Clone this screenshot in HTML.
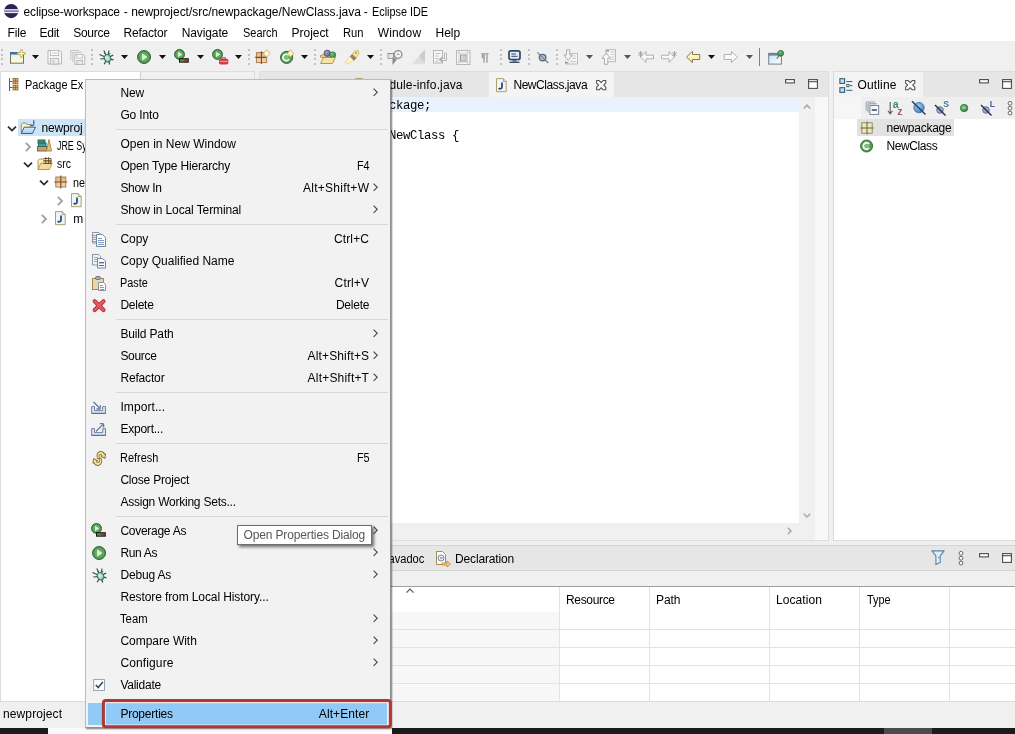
<!DOCTYPE html>
<html><head><meta charset="utf-8"><title>Eclipse IDE</title>
<style>
*{box-sizing:border-box;margin:0;padding:0}
html,body{width:1015px;height:734px;overflow:hidden;background:#fff}
body{font-family:"Liberation Sans",sans-serif;font-size:12px;color:#000;position:relative}
.a{position:absolute}
.t{position:absolute;white-space:nowrap;line-height:16px;height:16px;color:#000}
.code{font-family:"Liberation Mono",monospace;font-size:12.3px;letter-spacing:-.38px}
svg{position:absolute;overflow:visible}
#root{position:absolute;left:0;top:0;width:1015px;height:734px;will-change:transform}
.sep{position:absolute;left:116px;width:272px;height:1px;background:#d8d8d8}
.grip{position:absolute;width:2px;height:16px;top:49px;background:repeating-linear-gradient(#c2c2c4 0 2px,rgba(0,0,0,0) 2px 4.5px)}
</style></head>
<body>
<div id="root">
<svg width="0" height="0" style="left:0;top:0"><defs>
<linearGradient id="gNew" x1="0" y1="0" x2="0" y2="1"><stop offset="0" stop-color="#cfe6fb"/><stop offset=".5" stop-color="#f4f6ea"/><stop offset="1" stop-color="#fdf7d4"/></linearGradient>
<radialGradient id="gRun" cx=".5" cy=".5" r=".6"><stop offset="0" stop-color="#8fc48c"/><stop offset=".6" stop-color="#5a9e5c"/><stop offset="1" stop-color="#2f7a3a"/></radialGradient>
<linearGradient id="gTri" x1="0" y1="0" x2="1" y2="0"><stop offset="0" stop-color="#c9efc0"/><stop offset="1" stop-color="#f3fde8"/></linearGradient>
<radialGradient id="gBug" cx=".4" cy=".4" r=".7"><stop offset="0" stop-color="#d4f0e8"/><stop offset="1" stop-color="#8cc4b4"/></radialGradient>
<linearGradient id="gPkg" x1="0" y1="0" x2="0" y2="1"><stop offset="0" stop-color="#e2b88c"/><stop offset="1" stop-color="#f0d4b0"/></linearGradient>
<radialGradient id="gPurp" cx=".4" cy=".35" r=".7"><stop offset="0" stop-color="#a4a0d0"/><stop offset="1" stop-color="#5c5890"/></radialGradient>
<radialGradient id="gGrn" cx=".4" cy=".35" r=".7"><stop offset="0" stop-color="#7cc47c"/><stop offset="1" stop-color="#2f7a3c"/></radialGradient>
<linearGradient id="gBack" x1="0" y1="0" x2="0" y2="1"><stop offset="0" stop-color="#fffbe0"/><stop offset="1" stop-color="#f9e89c"/></linearGradient>
<linearGradient id="gPersp" x1="0" y1="0" x2="1" y2="1"><stop offset="0" stop-color="#c4e0f8"/><stop offset="1" stop-color="#fcfffc"/></linearGradient>
<radialGradient id="gBlue" cx=".4" cy=".35" r=".7"><stop offset="0" stop-color="#a4d0f0"/><stop offset="1" stop-color="#3c7cbc"/></radialGradient>
<linearGradient id="gProj" x1="0" y1="0" x2="0" y2="1"><stop offset="0" stop-color="#dcecfc"/><stop offset="1" stop-color="#a8ccf0"/></linearGradient>
</defs></svg>
<!-- window chrome -->
<div class="a" style="left:0px;top:0px;width:1015px;height:42px;background:#fff"></div>
<div class="a" style="left:0px;top:41px;width:1015px;height:31px;background:#f0f0f0"></div>
<div class="a" style="left:0px;top:71px;width:1015px;height:657px;background:#f0f0f0"></div>
<div class="a" style="left:0px;top:728px;width:1015px;height:6px;background:#fafafa"></div>
<div class="a" style="left:0px;top:728px;width:48px;height:6px;background:#1b1b1b"></div>
<div class="a" style="left:392px;top:728px;width:623px;height:6px;background:#1b1b1b"></div>
<div class="a" style="left:884px;top:728px;width:48px;height:6px;background:#4b4b4b"></div>
<svg style="left:3.6px;top:3.8px" width="16" height="16" viewBox="0 0 16 16"><circle cx="7.2" cy="7.1" r="7.1" fill="#2c2255"/><rect x="0" y="5.2" width="14.4" height="3.9" fill="#8784a6"/><rect x="0" y="5.2" width="14.4" height="1.1" fill="#ece9f4"/><rect x="0" y="8" width="14.4" height="1.1" fill="#ece9f4"/></svg>
<span class="t" style="left:23.5px;top:4px;letter-spacing:-0.14px">eclipse-workspace</span>
<span class="t" style="left:123.7px;top:4px">-</span>
<span class="t" style="left:131.2px;top:4px;letter-spacing:-0.03px">newproject/src/newpackage/NewClass.java</span>
<span class="t" style="left:363.7px;top:4px">-</span>
<span class="t" style="left:371.8px;top:4px;transform:scaleX(0.903);transform-origin:0 0">Eclipse IDE</span>
<span class="t" style="left:7.5px;top:24.5px;letter-spacing:-0.16px">File</span>
<span class="t" style="left:39.4px;top:24.5px;letter-spacing:-0.22px">Edit</span>
<span class="t" style="left:73.2px;top:24.5px;letter-spacing:-0.26px">Source</span>
<span class="t" style="left:123.5px;top:24.5px;letter-spacing:-0.21px">Refactor</span>
<span class="t" style="left:181.7px;top:24.5px;letter-spacing:-0.11px">Navigate</span>
<span class="t" style="left:242.5px;top:24.5px;transform:scaleX(0.912);transform-origin:0 0">Search</span>
<span class="t" style="left:291.6px;top:24.5px;letter-spacing:-0.04px">Project</span>
<span class="t" style="left:342.6px;top:24.5px;transform:scaleX(0.936);transform-origin:0 0">Run</span>
<span class="t" style="left:377.7px;top:24.5px;letter-spacing:0.14px">Window</span>
<span class="t" style="left:435.5px;top:24.5px;letter-spacing:0.00px">Help</span>
<!-- toolbar -->
<div class="grip" style="left:1px"></div>
<div class="grip" style="left:91px"></div>
<div class="grip" style="left:248px"></div>
<div class="grip" style="left:314px"></div>
<div class="grip" style="left:380px"></div>
<div class="grip" style="left:500px"></div>
<div class="grip" style="left:528px"></div>
<div class="grip" style="left:556px"></div>
<svg style="left:9px;top:49px" width="16" height="16" viewBox="0 0 16 16"><rect x="1.5" y="3.7" width="13" height="10.5" fill="url(#gNew)" stroke="#6e7458"/><rect x="1" y="3.2" width="11" height="2.3" fill="#3f6ea3"/><path d="M12.4 1.3v6.4M9.2 4.5h6.4" stroke="#cdb95c" stroke-width="2.6" stroke-linecap="round"/><path d="M12.4 2.3v4.4M10.2 4.5h4.4" stroke="#fffbe0" stroke-width="1.1" stroke-linecap="round"/></svg>
<svg style="left:47px;top:49px" width="16" height="16" viewBox="0 0 16 16"><path d="M1 1.5h12l1.5 1.5v12H1z" fill="#f4f4f4" stroke="#b9b9b9"/><rect x="3.5" y="1.5" width="8" height="5" fill="#fbfbfb" stroke="#c1c1c1"/><path d="M5 4h5" stroke="#c9c9c9"/><rect x="3.5" y="9.5" width="8" height="5.5" fill="#ededed" stroke="#bcbcbc"/><rect x="5.5" y="11" width="2" height="3.5" fill="#cfcfcf"/></svg>
<svg style="left:70px;top:49px" width="16" height="16" viewBox="0 0 16 16"><path d="M.8 11V1.5h8.7" fill="none" stroke="#c4c4c4"/><path d="M2.8 13V3.5h8.7" fill="none" stroke="#c0c0c0"/><path d="M4.8 5.5h8.7l1.3 1.3v8.7h-10z" fill="#f4f4f4" stroke="#b9b9b9"/><rect x="7" y="5.5" width="5.5" height="3.5" fill="#fbfbfb" stroke="#c4c4c4"/><rect x="7" y="11.5" width="5.5" height="4" fill="#e9e9e9" stroke="#bcbcbc"/></svg>
<svg style="left:98px;top:49px" width="16" height="16" viewBox="0 0 16 16"><path d="M9.3 8.5L5.8 1.6M9.7 8.5L11 1.5M9 8.8L1.5 5.5M9 9.3L2.3 10M9.5 9L6.2 15.2M9.8 9L11.7 15.5M10 8.5L15.2 6.1M10 9.3L15.5 10.8" stroke="#27574a" stroke-width="1.2" fill="none"/><path d="M6.3 4.2L8 5.8M12.2 4l-1.4 1.8" stroke="#27574a" stroke-width="1"/><ellipse cx="9.5" cy="9.2" rx="3.1" ry="3.7" transform="rotate(-25 9.5 9.2)" fill="url(#gBug)" stroke="#34705f" stroke-width="1"/></svg>
<svg style="left:136px;top:49px" width="16" height="16" viewBox="0 0 16 16"><circle cx="8.050" cy="8" r="6.5" fill="url(#gRun)" stroke="#2b6b34" stroke-width="1"/><path d="M6 4.2l5.2 3.8L6 11.8z" fill="url(#gTri)"/></svg>
<svg style="left:174px;top:49px" width="16" height="16" viewBox="0 0 16 16"><circle cx="5.5" cy="5.4" r="5" fill="url(#gRun)" stroke="#2b6b34" stroke-width=".9"/><path d="M4 2.6l4 2.8-4 2.8z" fill="url(#gTri)"/><rect x="5" y="9.2" width="9.8" height="4.5" fill="#141414"/><rect x="6" y="10.2" width="4" height="2.5" fill="#3f9a3c"/><rect x="10" y="10.2" width="3.8" height="2.5" fill="#a8382c"/></svg>
<svg style="left:212px;top:49px" width="16" height="16" viewBox="0 0 16 16"><circle cx="5.5" cy="5.4" r="5" fill="url(#gRun)" stroke="#2b6b34" stroke-width=".9"/><path d="M4 2.6l4 2.8-4 2.8z" fill="url(#gTri)"/><rect x="9.9" y="8.7" width="3.6" height="2.5" rx=".8" fill="none" stroke="#c23a3a" stroke-width="1.1"/><rect x="7.5" y="10.3" width="8.4" height="4.7" rx="1.1" fill="#d8484c" stroke="#b8262c" stroke-width=".8"/><path d="M7.8 12.4h7.8" stroke="#f0a0a0" stroke-width=".9"/></svg>
<svg style="left:255px;top:49px" width="16" height="16" viewBox="0 0 16 16"><rect x="1.4" y="3.6" width="10.3" height="10" fill="url(#gPkg)" stroke="#a9784c" stroke-width=".9"/><path d="M6.4 2.2v12.8M.2 8.4h11" stroke="#7a4a24" stroke-width="1.1"/><path d="M11.7 .8l3.3 3.7-3.3 3.7-3.3-3.7z" fill="#fdf3cc" stroke="#c8a45c" stroke-width=".8"/><path d="M11.7 2.5v4M9.9 4.5h3.6" stroke="#fff" stroke-width=".9"/></svg>
<svg style="left:279px;top:49px" width="16" height="16" viewBox="0 0 16 16"><circle cx="7.6" cy="8.4" r="6.1" fill="url(#gRun)" stroke="#2b6b34" stroke-width=".9"/><path d="M10 6.5A3.3 3.3 0 1 0 10 10.3" fill="none" stroke="#e9fbe4" stroke-width="1.9"/><path d="M11.5 .8l3.2 3.6-3.2 3.6-3.2-3.6z" fill="#fbf0b8" stroke="#c8a848" stroke-width=".8"/><path d="M11.5 2.5v3.8M9.8 4.4h3.4" stroke="#fffdf0" stroke-width=".9"/></svg>
<svg style="left:320px;top:49px" width="16" height="16" viewBox="0 0 16 16"><path d="M.6 6.3h2l.8-1.2h3.5l.8 1.2h5.5v2H.6z" fill="#f3d98c" stroke="#b48a3c" stroke-width=".9"/><circle cx="7.2" cy="4.3" r="3.2" fill="url(#gPurp)" stroke="#4b4878" stroke-width=".7"/><circle cx="12.6" cy="5.9" r="3.1" fill="url(#gGrn)" stroke="#2f6b3a" stroke-width=".7"/><path d="M.6 14.5l2.8-6h12l-3 6z" fill="#f7e4a0" stroke="#b48a3c" stroke-width=".9" stroke-linejoin="round"/></svg>
<svg style="left:344px;top:49px" width="16" height="16" viewBox="0 0 16 16"><path d="M.8 13.5L8 5.5l4.5 4L4 15z" fill="#fbf4c0" stroke="#e0d08c" stroke-width=".7"/><path d="M6.3 7.5l2.2-2.3 3.5 3.5-2 2.5z" fill="#8c8478" stroke="#6c645c" stroke-width=".7"/><path d="M8.3 5.2L11 1.8l3.2-.3.8 3-2.8 4.3z" fill="#f7e8a0" stroke="#c8ac5c" stroke-width=".8"/><circle cx="12" cy="4" r=".9" fill="#a88c3c"/></svg>
<svg style="left:387px;top:49px" width="16" height="16" viewBox="0 0 16 16"><rect x="1" y="4.5" width="5.5" height="5" fill="#e4e4e4" stroke="#9c9c9c" stroke-width=".9"/><path d="M.5 4.5h7" stroke="#8c8c8c"/><path d="M5.5 8v8l4.5-5.5z" fill="#8a8a8a"/><circle cx="11" cy="5.5" r="3.9" fill="#f2f2f2" stroke="#8c8c8c" stroke-width="1.3"/><path d="M9.5 5.5h3M11 4v1.5" stroke="#a4a4a4" stroke-width=".9"/></svg>
<svg style="left:410px;top:49px" width="16" height="16" viewBox="0 0 16 16"><path d="M2.5 14.5L14.5 .5l.5 13.5z" fill="#dedede"/><path d="M9 7l6-6.5v13.5z" fill="#cdcdcd"/><path d="M2 14.7h13" stroke="#e0e0e0"/></svg>
<svg style="left:432px;top:49px" width="16" height="16" viewBox="0 0 16 16"><rect x="1.5" y="1.5" width="9" height="12.5" fill="#f7f7f7" stroke="#b4b4b4"/><path d="M3.5 4.5h5M3.5 7h3M3.5 9.5h3M3.5 12h3" stroke="#b8b8b8" stroke-width=".9"/><path d="M13.5 3.5v7h-4" fill="none" stroke="#a8a8a8" stroke-width="2.6"/><path d="M13.5 3.5v7h-4" fill="none" stroke="#f4f4f4" stroke-width="1"/><path d="M10 7.5L6.5 10.5 10 13.5z" fill="#b0b0b0"/></svg>
<svg style="left:455px;top:49px" width="16" height="16" viewBox="0 0 16 16"><rect x="1.5" y="1.5" width="13.5" height="14" fill="#f8f8f8" stroke="#b8b8b8"/><path d="M1.5 4h13.5M1.5 13h13.5M4 1.5v14M12.5 1.5v14" stroke="#c8c8c8" stroke-width=".8"/><rect x="5.5" y="6" width="5.5" height="6" fill="#f0f0f0" stroke="#9c9c9c" stroke-width="1.1"/><path d="M6.5 8h3.5M6.5 10h3.5" stroke="#a8a8a8" stroke-width=".9"/></svg>
<svg style="left:478px;top:49px" width="16" height="16" viewBox="0 0 16 16"><g transform="translate(-1.2 0)"><path d="M4 4.7h7.8" stroke="#b0b0b0" stroke-width="1.3"/><path d="M7.3 4.5v9.3M10.2 4.5v9.3" stroke="#a6a6a6" stroke-width="1.5"/><path d="M7.5 4.5a2.7 2.7 0 0 0 0 5.4z" fill="#a6a6a6"/></g></svg>
<svg style="left:507px;top:49px" width="16" height="16" viewBox="0 0 16 16"><rect x="2" y="1.8" width="11" height="8.7" rx="1.8" fill="#e1edf9" stroke="#33475f" stroke-width="1.7"/><path d="M4.3 5h4.5M4.3 7.3h6.2" stroke="#33475f" stroke-width="1"/><path d="M5.5 11.3h4v1.2h-4z" fill="#33475f"/><path d="M2.5 13.3h10" stroke="#33475f" stroke-width="1.3"/></svg>
<svg style="left:535px;top:49px" width="16" height="16" viewBox="0 0 16 16"><circle cx="7.6" cy="8.6" r="3.3" fill="#b4c4d4" stroke="#55697c" stroke-width="1.3"/><path d="M2.3 3.3l11 10.7" stroke="#6c7c8c" stroke-width="1.1"/></svg>
<svg style="left:563px;top:49px" width="16" height="16" viewBox="0 0 16 16"><path d="M6.5 4.5h8v10.5H2.5v-3.5" fill="#f6f6f6" stroke="#b4b4b4" stroke-width=".9"/><path d="M9 7h4M9 9.5h4M7 12.5h6" stroke="#c4c4c4" stroke-width=".9"/><path d="M3.5 .8h3.3v5.2H9.3L5.2 11.5 1 6h2.5z" fill="#f4f4f4" stroke="#a4a4a4" stroke-width=".9"/><path d="M2.3 13.7h3" stroke="#8c8c8c" stroke-width="1.2"/></svg>
<svg style="left:601px;top:49px" width="16" height="16" viewBox="0 0 16 16"><rect x="5" y=".7" width="9.5" height="12" fill="#f6f6f6" stroke="#b4b4b4" stroke-width=".9"/><path d="M9.5 3h4M9.5 5.5h4M9.5 8h4M9.5 10.5h4" stroke="#c8c8c8" stroke-width=".9"/><rect x="5" y="1" width="3" height="1.8" fill="#a8a8a8"/><path d="M3.5 15.3h3.3v-6H9.3L5.2 4 1 9.3h2.5z" fill="#f9f9f9" stroke="#a4a4a4" stroke-width=".9"/></svg>
<svg style="left:638px;top:49px" width="16" height="16" viewBox="0 0 16 16"><path d="M15.5 6.2H8V2.6L2.5 8 8 13.4V9.8h7.5z" fill="#f9f9f9" stroke="#a8a8a8" stroke-width=".9"/><path d="M2.5 2v6M.3 3.3l4.4 3.4M4.7 3.3L.3 6.7" stroke="#9c9c9c" stroke-width=".9"/></svg>
<svg style="left:661px;top:49px" width="16" height="16" viewBox="0 0 16 16"><path d="M.5 6.2H8V2.6L13.5 8 8 13.4V9.8H.5z" fill="#f9f9f9" stroke="#a8a8a8" stroke-width=".9"/><path d="M13.5 2v6M11.3 3.3l4.4 3.4M15.7 3.3l-4.4 3.4" stroke="#9c9c9c" stroke-width=".9"/></svg>
<svg style="left:685px;top:49px" width="16" height="16" viewBox="0 0 16 16"><path d="M14.7 5.5H7.5V2.4L1.5 8l6 5.6v-3.1h7.2z" fill="url(#gBack)" stroke="#8a7a44" stroke-width="1" stroke-linejoin="round"/></svg>
<svg style="left:723px;top:49px" width="16" height="16" viewBox="0 0 16 16"><path d="M1.2 5.5h7.2V2.4L14.4 8l-6 5.6v-3.1H1.2z" fill="#fafafa" stroke="#b0b0b0" stroke-width="1" stroke-linejoin="round"/></svg>
<svg style="left:768px;top:49px" width="16" height="16" viewBox="0 0 16 16"><rect x=".7" y="4.3" width="12.7" height="10.8" fill="url(#gPersp)" stroke="#74808c" stroke-width="1"/><rect x=".5" y="4" width="13" height="2.6" fill="#6c849c"/><path d="M12 5.5L8.8 9.5" stroke="#3c6c4c" stroke-width="1.2"/><circle cx="12.7" cy="4.3" r="2.9" fill="url(#gGrn)" stroke="#2c6c3c" stroke-width=".8"/></svg>
<svg style="left:32px;top:55px" width="7" height="4" viewBox="0 0 7 4"><path d="M0 0h7L3.5 4z" fill="#111"/></svg>
<svg style="left:121px;top:55px" width="7" height="4" viewBox="0 0 7 4"><path d="M0 0h7L3.5 4z" fill="#111"/></svg>
<svg style="left:159px;top:55px" width="7" height="4" viewBox="0 0 7 4"><path d="M0 0h7L3.5 4z" fill="#111"/></svg>
<svg style="left:197px;top:55px" width="7" height="4" viewBox="0 0 7 4"><path d="M0 0h7L3.5 4z" fill="#111"/></svg>
<svg style="left:235px;top:55px" width="7" height="4" viewBox="0 0 7 4"><path d="M0 0h7L3.5 4z" fill="#111"/></svg>
<svg style="left:301px;top:55px" width="7" height="4" viewBox="0 0 7 4"><path d="M0 0h7L3.5 4z" fill="#111"/></svg>
<svg style="left:367px;top:55px" width="7" height="4" viewBox="0 0 7 4"><path d="M0 0h7L3.5 4z" fill="#111"/></svg>
<svg style="left:586px;top:55px" width="7" height="4" viewBox="0 0 7 4"><path d="M0 0h7L3.5 4z" fill="#555"/></svg>
<svg style="left:624px;top:55px" width="7" height="4" viewBox="0 0 7 4"><path d="M0 0h7L3.5 4z" fill="#555"/></svg>
<svg style="left:708px;top:55px" width="7" height="4" viewBox="0 0 7 4"><path d="M0 0h7L3.5 4z" fill="#111"/></svg>
<svg style="left:746px;top:55px" width="7" height="4" viewBox="0 0 7 4"><path d="M0 0h7L3.5 4z" fill="#555"/></svg>
<div class="a" style="left:759px;top:48px;width:1px;height:18px;background:#808080"></div>
<!-- package explorer -->
<div class="a" style="left:0px;top:71px;width:255px;height:631px;background:#fff;border:1px solid #dcdcdc"></div>
<div class="a" style="left:1px;top:72px;width:253px;height:25px;background:#f1f1f1"></div>
<div class="a" style="left:1px;top:72px;width:140px;height:25px;background:#fff;border-right:1px solid #d0d0d0"></div>
<svg style="left:8px;top:77px" width="16" height="16" viewBox="0 0 16 16"><path d="M1.5 1v13M1.5 4.5h3M1.5 10.5h3" stroke="#5c5c5c" fill="none"/><rect x="5" y="1.5" width="5" height="5" fill="#d9a86c" stroke="#9a6a34" stroke-width=".8"/><rect x="5" y="8" width="5" height="5" fill="#d9a86c" stroke="#9a6a34" stroke-width=".8"/><path d="M7.5 1.5v5M5 4h5M7.5 8v5M5 10.5h5" stroke="#8a5a28" stroke-width=".7"/></svg>
<span class="t" style="left:24.6px;top:77px;transform:scaleX(0.909);transform-origin:0 0;width:65.4px;overflow:hidden">Package Explorer</span>
<div class="a" style="left:18px;top:119px;width:120px;height:17px;background:#cde4f7"></div>
<svg style="left:7px;top:124px" width="10" height="10" viewBox="0 0 10 10"><path d="M1 2.6l4 4 4-4" fill="none" stroke="#2a2a2a" stroke-width="1.7"/></svg>
<svg style="left:20px;top:120px" width="16" height="16" viewBox="0 0 16 16"><path d="M1.3 13.3V4.3l1.2-1.3h3.7l1 1.5h3.3V7" fill="#fbf1c8" stroke="#8a8668" stroke-width=".9" stroke-linejoin="round"/><path d="M1.3 13.5l2.9-6.3h11.3l-3 6.3z" fill="url(#gProj)" stroke="#34608c" stroke-width="1" stroke-linejoin="round"/><path d="M13.8 .3v3.9a1.6 1.6 0 0 1-3.1 .3" fill="none" stroke="#34608c" stroke-width="1.2"/></svg>
<span class="t" style="left:41.5px;top:120px;letter-spacing:-0.15px;width:41.6px;overflow:hidden">newproject</span>
<svg style="left:23px;top:142px" width="10" height="10" viewBox="0 0 10 10"><path d="M2.9 .9l4.1 4.1-4.1 4.1" fill="none" stroke="#a0a0a0" stroke-width="1.8"/></svg>
<svg style="left:37px;top:138px" width="16" height="16" viewBox="0 0 16 16"><rect x=".5" y="8.5" width="9" height="4.5" fill="#c8a070" stroke="#8a6434"/><rect x="1.5" y="5" width="7.5" height="3.5" fill="#4c9a8c" stroke="#2a6e64"/><rect x="1" y="2" width="7" height="3" fill="#3c8a7c" stroke="#2a6e64"/><path d="M9.5 13L12 1.5 14.5 13z" fill="#e4c088" stroke="#b08a4c"/></svg>
<span class="t" style="left:57px;top:138.4px;transform:scaleX(0.741);transform-origin:0 0">JRE System Library</span>
<svg style="left:23px;top:160px" width="10" height="10" viewBox="0 0 10 10"><path d="M1 2.6l4 4 4-4" fill="none" stroke="#2a2a2a" stroke-width="1.7"/></svg>
<svg style="left:37px;top:156px" width="16" height="16" viewBox="0 0 16 16"><path d="M1 13.5V4.5l1.5-1.5h3.5l1 1.5h6.5V7" fill="#f9ecc0" stroke="#b48c44" stroke-width=".9" stroke-linejoin="round"/><path d="M1 13.5l2.8-6.3h11.4l-2.8 6.3z" fill="#f6dc98" stroke="#b48c44" stroke-width=".9" stroke-linejoin="round"/><path d="M6.5 2.5h7.5v5M6 5h8.5M8.8 1.2v6.5M11.6 1.2v6.5M6.5 7.5h7.5" stroke="#5c4424" stroke-width=".9" fill="none"/></svg>
<span class="t" style="left:57.3px;top:156.4px;transform:scaleX(0.869);transform-origin:0 0">src</span>
<svg style="left:39px;top:178px" width="10" height="10" viewBox="0 0 10 10"><path d="M1 2.6l4 4 4-4" fill="none" stroke="#2a2a2a" stroke-width="1.7"/></svg>
<svg style="left:53px;top:174px" width="16" height="16" viewBox="0 0 16 16"><rect x="2.8" y="3" width="10" height="10" fill="url(#gPkg)" stroke="#a87440" stroke-width=".9"/><path d="M7.8 1.5v13M1.3 8h13" stroke="#7c4c24" stroke-width="1.1"/></svg>
<span class="t" style="left:73px;top:174.6px;transform:scaleX(0.898);transform-origin:0 0">newpackage</span>
<svg style="left:55px;top:196px" width="10" height="10" viewBox="0 0 10 10"><path d="M2.9 .9l4.1 4.1-4.1 4.1" fill="none" stroke="#a0a0a0" stroke-width="1.8"/></svg>
<svg style="left:70px;top:192.5px" width="16" height="16" viewBox="0 0 16 16"><path d="M1.5 .6h6.8l2.9 2.9v10.2H1.5z" fill="#eef5fb" stroke="#a8925c" stroke-width=".9"/><path d="M8.3 .6v2.9h2.9" fill="#e8e0c4" stroke="#a8925c" stroke-width=".8"/><path d="M7 4.5v4.7a1.9 1.9 0 0 1-3.3 1" fill="none" stroke="#2c4c7c" stroke-width="1.8"/></svg>
<span class="t" style="left:89px;top:192px">NewClass.java</span>
<svg style="left:39px;top:214px" width="10" height="10" viewBox="0 0 10 10"><path d="M2.9 .9l4.1 4.1-4.1 4.1" fill="none" stroke="#a0a0a0" stroke-width="1.8"/></svg>
<svg style="left:53.5px;top:210.5px" width="16" height="16" viewBox="0 0 16 16"><path d="M1.5 .6h6.8l2.9 2.9v10.2H1.5z" fill="#eef5fb" stroke="#a8925c" stroke-width=".9"/><path d="M8.3 .6v2.9h2.9" fill="#e8e0c4" stroke="#a8925c" stroke-width=".8"/><path d="M7 4.5v4.7a1.9 1.9 0 0 1-3.3 1" fill="none" stroke="#2c4c7c" stroke-width="1.8"/></svg>
<span class="t" style="left:73.2px;top:210.5px;letter-spacing:0.20px;width:10.4px;overflow:hidden">module-info.java</span>
<!-- editor -->
<div class="a" style="left:259px;top:71px;width:570px;height:470px;background:#fff;border:1px solid #dcdcdc"></div>
<div class="a" style="left:260px;top:72px;width:568px;height:25px;background:#e6e6e6"></div>
<div class="a" style="left:489px;top:72px;width:125px;height:25px;background:#f4f4f4"></div>
<svg style="left:353.6px;top:77.6px" width="16" height="16" viewBox="0 0 16 16"><path d="M1.5 .6h6.8l2.9 2.9v10.2H1.5z" fill="#eef5fb" stroke="#a8925c" stroke-width=".9"/><path d="M8.3 .6v2.9h2.9" fill="#e8e0c4" stroke="#a8925c" stroke-width=".8"/><path d="M7 4.5v4.7a1.9 1.9 0 0 1-3.3 1" fill="none" stroke="#2c4c7c" stroke-width="1.8"/></svg>
<span class="t" style="left:372.5px;top:77px;letter-spacing:0.13px">module-info.java</span>
<svg style="left:495px;top:78px" width="16" height="16" viewBox="0 0 16 16"><path d="M1.5 .6h6.8l2.9 2.9v10.2H1.5z" fill="#eef5fb" stroke="#a8925c" stroke-width=".9"/><path d="M8.3 .6v2.9h2.9" fill="#e8e0c4" stroke="#a8925c" stroke-width=".8"/><path d="M7 4.5v4.7a1.9 1.9 0 0 1-3.3 1" fill="none" stroke="#2c4c7c" stroke-width="1.8"/></svg>
<span class="t" style="left:513.4px;top:77px;letter-spacing:-0.43px">NewClass.java</span>
<svg style="left:595.6px;top:79.7px" width="10.4" height="10.4" viewBox="0 0 10.4 10.4"><path d="M.6 .6H3.2L5.2 2.7 7.2 .6H9.8V3.2L7.7 5.2 9.8 7.2V9.8H7.2L5.2 7.7 3.2 9.8H.6V7.2L2.7 5.2 .6 3.2z" fill="#fbfbfb" stroke="#505050" stroke-width="1.05" stroke-linejoin="round"/></svg>
<svg style="left:785px;top:79px" width="10" height="5" viewBox="0 0 10 5"><rect x=".6" y=".6" width="8.8" height="3.3" fill="#fff" stroke="#4c4c4c" stroke-width="1.1"/></svg>
<svg style="left:808px;top:79px" width="10" height="10" viewBox="0 0 10 10"><rect x=".6" y=".6" width="8.8" height="8.8" fill="#fff" stroke="#4c4c4c" stroke-width="1.1"/><path d="M.6 2.7h8.8" stroke="#4c4c4c" stroke-width="1.1"/></svg>
<div class="a" style="left:260px;top:97px;width:539px;height:15px;background:#e8f2fe"></div>
<span class="t code" style="left:297.9px;top:97.8px">package newpackage;</span>
<span class="t code" style="left:297.9px;top:127.8px">public class NewClass {</span>
<div class="a" style="left:799px;top:97px;width:16px;height:426px;background:#f0f0f0"></div>
<div class="a" style="left:815px;top:97px;width:13px;height:443px;background:#f8f8f8"></div>
<div class="a" style="left:260px;top:523px;width:555px;height:17px;background:#f0f0f0"></div>
<svg style="left:803px;top:104px" width="8" height="5" viewBox="0 0 8 5"><path d="M.8 4.5L4 1.2 7.2 4.5" fill="none" stroke="#a8a8a8" stroke-width="1.5"/></svg>
<svg style="left:803px;top:513px" width="8" height="5" viewBox="0 0 8 5"><path d="M.8 .8L4 4 7.2 .8" fill="none" stroke="#a8a8a8" stroke-width="1.5"/></svg>
<svg style="left:787px;top:527px" width="5" height="8" viewBox="0 0 5 8"><path d="M.8 .8L4 4 .8 7.2" fill="none" stroke="#a8a8a8" stroke-width="1.5"/></svg>
<!-- outline -->
<div class="a" style="left:833px;top:71px;width:183px;height:470px;background:#fff;border:1px solid #dcdcdc"></div>
<div class="a" style="left:834px;top:72px;width:181px;height:25px;background:#e6e6e6"></div>
<div class="a" style="left:834px;top:72px;width:89px;height:25px;background:#f3f3f3"></div>
<div class="a" style="left:834px;top:97px;width:181px;height:21.5px;background:#f6f6f6"></div>
<svg style="left:839px;top:78px" width="14" height="15" viewBox="0 0 14 15"><rect x=".9" y=".7" width="4.7" height="4.7" fill="#c0e0f4" stroke="#345c74" stroke-width="1.1"/><rect x=".9" y="9.7" width="4.7" height="4.7" fill="#c0e0f4" stroke="#345c74" stroke-width="1.1"/><path d="M7.3 3.5h6M7.3 12.3h6M11 7.6h2.3" stroke="#345c74" stroke-width="1"/><rect x="7.7" y="6.4" width="2.3" height="2.3" fill="#f4fafc" stroke="#345c74" stroke-width=".9"/></svg>
<span class="t" style="left:857.5px;top:77px;letter-spacing:0.15px">Outline</span>
<svg style="left:904.6px;top:79.7px" width="10.4" height="10.4" viewBox="0 0 10.4 10.4"><path d="M.6 .6H3.2L5.2 2.7 7.2 .6H9.8V3.2L7.7 5.2 9.8 7.2V9.8H7.2L5.2 7.7 3.2 9.8H.6V7.2L2.7 5.2 .6 3.2z" fill="#fbfbfb" stroke="#505050" stroke-width="1.05" stroke-linejoin="round"/></svg>
<svg style="left:979px;top:79px" width="10" height="5" viewBox="0 0 10 5"><rect x=".6" y=".6" width="8.8" height="3.3" fill="#fff" stroke="#4c4c4c" stroke-width="1.1"/></svg>
<svg style="left:1002px;top:79px" width="10" height="10" viewBox="0 0 10 10"><rect x=".6" y=".6" width="8.8" height="8.8" fill="#fff" stroke="#4c4c4c" stroke-width="1.1"/><path d="M.6 2.7h8.8" stroke="#4c4c4c" stroke-width="1.1"/></svg>
<div class="a" style="left:861px;top:97px;width:154px;height:21.5px;background:#efefef"></div>
<svg style="left:865px;top:101px" width="16" height="16" viewBox="0 0 16 16"><path d="M1.2 9.5V1h8.5" fill="none" stroke="#8a96a4" stroke-width=".9"/><path d="M3 11.5V2.8h8.7" fill="none" stroke="#7c8a98" stroke-width=".9"/><rect x="4.9" y="4.6" width="8.8" height="8.8" fill="#fbfcfd" stroke="#66788a" stroke-width=".9"/><path d="M6.7 9h5.2" stroke="#274a6c" stroke-width="1.5"/></svg>
<svg style="left:887px;top:101px" width="16" height="16" viewBox="0 0 16 16"><path d="M3.2 1v11.5M1 9.8l2.2 3 2.2-3" fill="none" stroke="#5f5f5f" stroke-width="1.1"/><text x="5.8" y="6.8" font-family="Liberation Sans,sans-serif" font-weight="bold" font-size="10.5" fill="#2f8c7c">a</text><text x="10.2" y="14.3" font-family="Liberation Sans,sans-serif" font-weight="bold" font-size="10.5" fill="#b44c8c">z</text></svg>
<svg style="left:910.5px;top:100.3px" width="16" height="16" viewBox="0 0 16 16"><circle cx="8" cy="7.6" r="5.2" fill="url(#gBlue)" stroke="#3c6c9c" stroke-width=".8"/><path d="M1 1.2l13.5 13.3" stroke="#1f3f6f" stroke-width="1.5"/></svg>
<svg style="left:933px;top:101px" width="16" height="16" viewBox="0 0 16 16"><circle cx="7" cy="9" r="3.3" fill="#a4aec0" stroke="#5c6880" stroke-width=".9"/><path d="M2 4l10.5 10.5" stroke="#1c2c5c" stroke-width="1.4"/><text x="10.3" y="5.9" font-family="Liberation Sans,sans-serif" font-weight="bold" font-size="8.6" fill="#3c7c9c">S</text></svg>
<svg style="left:956px;top:101px" width="16" height="16" viewBox="0 0 16 16"><circle cx="8.1" cy="7" r="3.7" fill="url(#gGrn)" stroke="#2c7c3c" stroke-width=".8"/><path d="M6 7h4.2" stroke="#bfe6bc" stroke-width=".9"/></svg>
<svg style="left:980px;top:101px" width="16" height="16" viewBox="0 0 16 16"><circle cx="6" cy="9" r="3.3" fill="#a4aec0" stroke="#5c6880" stroke-width=".9"/><path d="M1 4l10.5 10.5" stroke="#1c2c5c" stroke-width="1.4"/><text x="9.8" y="5.9" font-family="Liberation Sans,sans-serif" font-weight="bold" font-size="8.6" fill="#4c5cac">L</text></svg>
<svg style="left:1007.4px;top:101px" width="6" height="16" viewBox="0 0 6 16"><circle cx="3" cy="2.3" r="1.9" fill="#fafafa" stroke="#5a5a5a" stroke-width=".9"/><circle cx="3" cy="7.2" r="1.9" fill="#fafafa" stroke="#5a5a5a" stroke-width=".9"/><circle cx="3" cy="12.1" r="1.9" fill="#fafafa" stroke="#5a5a5a" stroke-width=".9"/></svg>
<div class="a" style="left:857px;top:119px;width:97px;height:17px;background:#e2e2e2"></div>
<svg style="left:859px;top:120px" width="16" height="16" viewBox="0 0 16 16"><rect x="2.8" y="2.8" width="10.4" height="10.4" fill="#ebe7c4" stroke="#8c8454" stroke-width=".9"/><path d="M8 1.5v13M1.5 8h13" stroke="#6c6434" stroke-width="1"/></svg>
<span class="t" style="left:886.5px;top:120px;letter-spacing:-0.24px;width:67.0px;overflow:hidden">newpackage</span>
<svg style="left:859px;top:138px" width="16" height="16" viewBox="0 0 16 16"><circle cx="7.6" cy="8" r="6" fill="url(#gRun)" stroke="#2a6e30" stroke-width=".9"/><path d="M10 6A3.2 3.2 0 1 0 10 10" fill="none" stroke="#f0fbec" stroke-width="1.9"/></svg>
<span class="t" style="left:886.5px;top:138px;letter-spacing:-0.41px">NewClass</span>
<!-- bottom panel -->
<div class="a" style="left:259px;top:545px;width:756px;height:25.5px;background:#e6e6e6;border-top:1px solid #d4d4d4;border-bottom:1px solid #d4d4d4"></div>
<span class="t" style="left:382.7px;top:551px;transform:scaleX(0.924);transform-origin:0 0">Javadoc</span>
<svg style="left:435px;top:551px" width="16" height="16" viewBox="0 0 16 16"><path d="M1.5 .5h6l3 3v10h-9z" fill="#fcfcf4" stroke="#a08c5c"/><circle cx="6" cy="7" r="3" fill="#e4ecf8" stroke="#6c84a4" stroke-width=".9"/><path d="M5 7h2.5" stroke="#4c6484" stroke-width=".9"/><path d="M7 12h5v-2l3.5 3-3.5 3v-2H7z" fill="#f4c878" stroke="#c48c2c" stroke-width=".8"/></svg>
<span class="t" style="left:455px;top:551px;letter-spacing:-0.14px">Declaration</span>
<svg style="left:930.6px;top:550.4px" width="14" height="16" viewBox="0 0 14 16"><path d="M.9 .9h12.2L9.2 5.8v6.7L4.9 14.6V5.8z" fill="#dceefb" stroke="#5c84a8" stroke-width="1.1" stroke-linejoin="round"/><path d="M7 7.5h1.8" stroke="#5c84a8" stroke-width=".9"/></svg>
<svg style="left:957.8px;top:550.8px" width="6" height="16" viewBox="0 0 6 16"><circle cx="3" cy="2.3" r="1.9" fill="#fafafa" stroke="#5a5a5a" stroke-width=".9"/><circle cx="3" cy="7.2" r="1.9" fill="#fafafa" stroke="#5a5a5a" stroke-width=".9"/><circle cx="3" cy="12.1" r="1.9" fill="#fafafa" stroke="#5a5a5a" stroke-width=".9"/></svg>
<svg style="left:979px;top:553px" width="10" height="5" viewBox="0 0 10 5"><rect x=".6" y=".6" width="8.8" height="3.3" fill="#fff" stroke="#4c4c4c" stroke-width="1.1"/></svg>
<svg style="left:1002px;top:553px" width="10" height="10" viewBox="0 0 10 10"><rect x=".6" y=".6" width="8.8" height="8.8" fill="#fff" stroke="#4c4c4c" stroke-width="1.1"/><path d="M.6 2.7h8.8" stroke="#4c4c4c" stroke-width="1.1"/></svg>
<div class="a" style="left:259px;top:586px;width:756px;height:115.5px;background:#fff;border-top:1px solid #a0a0a0;border-bottom:1px solid #dcdcdc"></div>
<div class="a" style="left:259px;top:612px;width:300px;height:89px;background:#f7f7f7"></div>
<div class="a" style="left:559px;top:587px;width:1px;height:114px;background:#e2e2e2"></div>
<div class="a" style="left:649px;top:587px;width:1px;height:114px;background:#e2e2e2"></div>
<div class="a" style="left:769px;top:587px;width:1px;height:114px;background:#e2e2e2"></div>
<div class="a" style="left:859px;top:587px;width:1px;height:114px;background:#e2e2e2"></div>
<div class="a" style="left:949px;top:587px;width:1px;height:114px;background:#e2e2e2"></div>
<div class="a" style="left:259px;top:629px;width:756px;height:1px;background:#e2e2e2"></div>
<div class="a" style="left:259px;top:647px;width:756px;height:1px;background:#e2e2e2"></div>
<div class="a" style="left:259px;top:665px;width:756px;height:1px;background:#e2e2e2"></div>
<div class="a" style="left:259px;top:683px;width:756px;height:1px;background:#e2e2e2"></div>
<svg style="left:406px;top:588px" width="8" height="5" viewBox="0 0 8 5"><path d="M.5 4.6L4 1.1 7.5 4.6" fill="none" stroke="#555" stroke-width="1.2"/></svg>
<span class="t" style="left:566px;top:592px;letter-spacing:-0.33px">Resource</span>
<span class="t" style="left:656px;top:592px;letter-spacing:-0.12px">Path</span>
<span class="t" style="left:776px;top:592px;letter-spacing:0.07px">Location</span>
<span class="t" style="left:866.5px;top:592px;transform:scaleX(0.911);transform-origin:0 0">Type</span>
<span class="t" style="left:3px;top:705.5px;letter-spacing:0.11px">newproject</span>
<!-- context menu -->
<div class="a" style="left:85px;top:79px;width:305.5px;height:649px;background:#f2f2f2;border:1px solid #bdbdbd;border-right-color:#8e8e8e;border-bottom-color:#8e8e8e;box-shadow:1px 1px 1.5px rgba(0,0,0,.5)"></div>
<div class="a" style="left:88px;top:702.5px;width:299px;height:22.5px;background:#91c9f7"></div>
<span class="t" style="left:120.4px;top:84.7px;letter-spacing:-0.17px">New</span>
<svg style="left:372.8px;top:88px" width="5" height="9" viewBox="0 0 5 9"><path d="M.6 .7l3.6 3.6-3.6 3.6" fill="none" stroke="#444" stroke-width="1.1"/></svg>
<span class="t" style="left:120.4px;top:106.7px;letter-spacing:-0.14px">Go Into</span>
<div class="sep" style="top:129px"></div>
<span class="t" style="left:120.4px;top:135.7px;letter-spacing:0.01px">Open in New Window</span>
<span class="t" style="left:120.4px;top:157.7px;letter-spacing:-0.18px">Open Type Hierarchy</span>
<span class="t" style="left:356.6px;top:157.7px;transform:scaleX(0.899);transform-origin:0 0">F4</span>
<span class="t" style="left:120.4px;top:179.7px;letter-spacing:-0.31px">Show In</span>
<span class="t" style="left:303.0px;top:179.7px;letter-spacing:0.26px">Alt+Shift+W</span>
<svg style="left:372.8px;top:183px" width="5" height="9" viewBox="0 0 5 9"><path d="M.6 .7l3.6 3.6-3.6 3.6" fill="none" stroke="#444" stroke-width="1.1"/></svg>
<span class="t" style="left:120.4px;top:201.7px;letter-spacing:-0.11px">Show in Local Terminal</span>
<svg style="left:372.8px;top:205px" width="5" height="9" viewBox="0 0 5 9"><path d="M.6 .7l3.6 3.6-3.6 3.6" fill="none" stroke="#444" stroke-width="1.1"/></svg>
<div class="sep" style="top:224px"></div>
<svg style="left:91px;top:231px" width="16" height="16" viewBox="0 0 16 16"><path d="M1.5 1.5h6.5l2 2v8.5h-8.5z" fill="#f2f5f8" stroke="#8794a4" stroke-width="1"/><path d="M2 4.5h3M2 6.5h3M2 8.5h3M2 10.5h3" stroke="#88a4c8" stroke-width="1"/><path d="M5.5 3.5h6l3 3v9h-9z" fill="#fdfdfd" stroke="#77879a" stroke-width="1"/><path d="M7 7.5h4M7 9.5h6M7 11.5h6M7 13.5h6" stroke="#7c9cc8" stroke-width="1" shape-rendering="crispEdges"/></svg>
<span class="t" style="left:120.4px;top:230.7px;letter-spacing:-0.05px">Copy</span>
<span class="t" style="left:333.90000000000003px;top:230.7px;letter-spacing:0.16px">Ctrl+C</span>
<svg style="left:91px;top:253px" width="16" height="16" viewBox="0 0 16 16"><path d="M1.5 1.5h6l2 2v8.5h-8z" fill="#f2f5f8" stroke="#8794a4" stroke-width="1"/><path d="M3 4.5h4M3 6.5h3M3 8.5h3" stroke="#98a8c0" stroke-width="1" shape-rendering="crispEdges"/><path d="M6.5 5.5h5l3 2.5v7h-8z" fill="#f6f8fb" stroke="#77879a" stroke-width="1"/><path d="M8 9.5h5M8 12.5h5" stroke="#5c6c94" stroke-width="1" shape-rendering="crispEdges"/><path d="M8 10.5h5" stroke="#b4c0d8" stroke-width="1" shape-rendering="crispEdges"/></svg>
<span class="t" style="left:120.4px;top:252.7px;letter-spacing:0.00px">Copy Qualified Name</span>
<svg style="left:91px;top:275px" width="16" height="16" viewBox="0 0 16 16"><rect x="1.5" y="3.5" width="11" height="11" fill="#ead6a8" stroke="#9c8858" stroke-width="1"/><rect x="4.5" y="1.5" width="5" height="3" rx="1.2" fill="#a4acbc" stroke="#6c7484" stroke-width="1"/><path d="M7.5 7.5h5l2 2v6h-7z" fill="#fdfdfd" stroke="#8794a4" stroke-width="1"/><path d="M9 10.5h3M9 12.5h4M9 14.5h4" stroke="#7c9cc8" stroke-width="1" shape-rendering="crispEdges"/></svg>
<span class="t" style="left:120.4px;top:274.7px;transform:scaleX(0.906);transform-origin:0 0">Paste</span>
<span class="t" style="left:334.6px;top:274.7px;letter-spacing:0.15px">Ctrl+V</span>
<svg style="left:91px;top:297px" width="16" height="16" viewBox="0 0 16 16"><path d="M3.7 4.2l8.8 8.8M12.5 4.2l-8.8 8.8" stroke="#b8323e" stroke-width="4.2" stroke-linecap="round"/><path d="M3.7 4.2l8.8 8.8M12.5 4.2l-8.8 8.8" stroke="#e25a62" stroke-width="2.4" stroke-linecap="round"/></svg>
<span class="t" style="left:120.4px;top:296.7px;letter-spacing:-0.25px">Delete</span>
<span class="t" style="left:335.90000000000003px;top:296.7px;letter-spacing:-0.23px">Delete</span>
<div class="sep" style="top:319px"></div>
<span class="t" style="left:120.4px;top:325.7px;letter-spacing:-0.15px">Build Path</span>
<svg style="left:372.8px;top:329px" width="5" height="9" viewBox="0 0 5 9"><path d="M.6 .7l3.6 3.6-3.6 3.6" fill="none" stroke="#444" stroke-width="1.1"/></svg>
<span class="t" style="left:120.4px;top:347.7px;letter-spacing:-0.32px">Source</span>
<span class="t" style="left:307.6px;top:347.7px;letter-spacing:0.14px">Alt+Shift+S</span>
<svg style="left:372.8px;top:351px" width="5" height="9" viewBox="0 0 5 9"><path d="M.6 .7l3.6 3.6-3.6 3.6" fill="none" stroke="#444" stroke-width="1.1"/></svg>
<span class="t" style="left:120.4px;top:369.7px;letter-spacing:-0.16px">Refactor</span>
<span class="t" style="left:307.6px;top:369.7px;letter-spacing:0.20px">Alt+Shift+T</span>
<svg style="left:372.8px;top:373px" width="5" height="9" viewBox="0 0 5 9"><path d="M.6 .7l3.6 3.6-3.6 3.6" fill="none" stroke="#444" stroke-width="1.1"/></svg>
<div class="sep" style="top:392px"></div>
<svg style="left:91px;top:399px" width="16" height="16" viewBox="0 0 16 16"><path d="M.7 7.6h2.8v4h8.2v-4h2.8v6.9H.7z" fill="#dbe6f5" stroke="#7080a0" stroke-width="1" stroke-linejoin="miter"/><path d="M.7 14.3h13.8" stroke="#5c6c8c" stroke-width="1.1"/><path d="M2.5 3l6 6" fill="none" stroke="#68789a" stroke-width="1.2"/><path d="M9.3 10V6.2M9.3 10H5.5" fill="none" stroke="#68789a" stroke-width="1.3"/></svg>
<span class="t" style="left:120.4px;top:398.7px;letter-spacing:0.08px">Import...</span>
<svg style="left:91px;top:421px" width="16" height="16" viewBox="0 0 16 16"><path d="M.7 7.6h2.8v4h8.2v-4h2.8v6.9H.7z" fill="#dbe6f5" stroke="#7080a0" stroke-width="1" stroke-linejoin="miter"/><path d="M.7 14.3h13.8" stroke="#5c6c8c" stroke-width="1.1"/><path d="M5 10.5l7-7.2" fill="none" stroke="#68789a" stroke-width="1.2"/><path d="M12.6 2.7v3.8M12.6 2.7H8.8" fill="none" stroke="#68789a" stroke-width="1.3"/></svg>
<span class="t" style="left:120.4px;top:420.7px;letter-spacing:-0.22px">Export...</span>
<div class="sep" style="top:443px"></div>
<svg style="left:91px;top:450px" width="16" height="16" viewBox="0 0 16 16"><g stroke-linejoin="round" transform="translate(.3 .5) rotate(-22 8 8) scale(.95 1.08) translate(.4 -.6)"><path d="M6.3 7.6C6 4.2 8.5 2 11 2.3c2.3 .3 3.8 2 3.9 4.2l1-.1-2.3 3.4-2.9-2.9 1.2-.1c-.1-1-.7-1.7-1.6-1.8-1.3-.1-2 .9-1.9 2.8z" fill="#fbe596" stroke="#8a7838" stroke-width="1"/><path d="M9.7 8.4C10 11.8 7.5 14 5 13.7c-2.3-.3-3.8-2-3.9-4.2l-1 .1 2.3-3.4 2.9 2.9-1.2 .1c.1 1 .7 1.7 1.6 1.8 1.3 .1 2-.9 1.9-2.8z" fill="#fbe596" stroke="#8a7838" stroke-width="1"/></g></svg>
<span class="t" style="left:120.4px;top:449.7px;transform:scaleX(0.914);transform-origin:0 0">Refresh</span>
<span class="t" style="left:356.6px;top:449.7px;transform:scaleX(0.899);transform-origin:0 0">F5</span>
<span class="t" style="left:120.4px;top:471.7px;letter-spacing:-0.20px">Close Project</span>
<span class="t" style="left:120.4px;top:493.7px;letter-spacing:-0.23px">Assign Working Sets...</span>
<div class="sep" style="top:516px"></div>
<svg style="left:91px;top:523px" width="16" height="16" viewBox="0 0 16 16"><circle cx="5.5" cy="5.4" r="5" fill="url(#gRun)" stroke="#2b6b34" stroke-width=".9"/><path d="M4 2.6l4 2.8-4 2.8z" fill="url(#gTri)"/><rect x="5" y="9.2" width="9.8" height="4.5" fill="#141414"/><rect x="6" y="10.2" width="4" height="2.5" fill="#3f9a3c"/><rect x="10" y="10.2" width="3.8" height="2.5" fill="#a8382c"/></svg>
<span class="t" style="left:120.4px;top:522.7px;letter-spacing:-0.27px">Coverage As</span>
<svg style="left:372.8px;top:526px" width="5" height="9" viewBox="0 0 5 9"><path d="M.6 .7l3.6 3.6-3.6 3.6" fill="none" stroke="#444" stroke-width="1.1"/></svg>
<svg style="left:91px;top:545px" width="16" height="16" viewBox="0 0 16 16"><circle cx="8.050" cy="8" r="6.5" fill="url(#gRun)" stroke="#2b6b34" stroke-width="1"/><path d="M6 4.2l5.2 3.8L6 11.8z" fill="url(#gTri)"/></svg>
<span class="t" style="left:120.4px;top:544.7px;letter-spacing:-0.32px">Run As</span>
<svg style="left:372.8px;top:548px" width="5" height="9" viewBox="0 0 5 9"><path d="M.6 .7l3.6 3.6-3.6 3.6" fill="none" stroke="#444" stroke-width="1.1"/></svg>
<svg style="left:91px;top:567px" width="16" height="16" viewBox="0 0 16 16"><path d="M9.3 8.5L5.8 1.6M9.7 8.5L11 1.5M9 8.8L1.5 5.5M9 9.3L2.3 10M9.5 9L6.2 15.2M9.8 9L11.7 15.5M10 8.5L15.2 6.1M10 9.3L15.5 10.8" stroke="#27574a" stroke-width="1.2" fill="none"/><path d="M6.3 4.2L8 5.8M12.2 4l-1.4 1.8" stroke="#27574a" stroke-width="1"/><ellipse cx="9.5" cy="9.2" rx="3.1" ry="3.7" transform="rotate(-25 9.5 9.2)" fill="url(#gBug)" stroke="#34705f" stroke-width="1"/></svg>
<span class="t" style="left:120.4px;top:566.7px;letter-spacing:-0.16px">Debug As</span>
<svg style="left:372.8px;top:570px" width="5" height="9" viewBox="0 0 5 9"><path d="M.6 .7l3.6 3.6-3.6 3.6" fill="none" stroke="#444" stroke-width="1.1"/></svg>
<span class="t" style="left:120.4px;top:588.7px;letter-spacing:-0.10px">Restore from Local History...</span>
<span class="t" style="left:120.4px;top:610.7px;transform:scaleX(0.937);transform-origin:0 0">Team</span>
<svg style="left:372.8px;top:614px" width="5" height="9" viewBox="0 0 5 9"><path d="M.6 .7l3.6 3.6-3.6 3.6" fill="none" stroke="#444" stroke-width="1.1"/></svg>
<span class="t" style="left:120.4px;top:632.7px;letter-spacing:-0.02px">Compare With</span>
<svg style="left:372.8px;top:636px" width="5" height="9" viewBox="0 0 5 9"><path d="M.6 .7l3.6 3.6-3.6 3.6" fill="none" stroke="#444" stroke-width="1.1"/></svg>
<span class="t" style="left:120.4px;top:654.7px;letter-spacing:0.13px">Configure</span>
<svg style="left:372.8px;top:658px" width="5" height="9" viewBox="0 0 5 9"><path d="M.6 .7l3.6 3.6-3.6 3.6" fill="none" stroke="#444" stroke-width="1.1"/></svg>
<svg style="left:91px;top:677px" width="16" height="16" viewBox="0 0 16 16"><rect x="2.7" y="2.6" width="10.8" height="10.8" fill="#fdfdfd" stroke="#8c9cb0" stroke-width=".9"/><path d="M4.8 8l2.4 2.6 4.6-5.6" fill="none" stroke="#34465c" stroke-width="1.5"/></svg>
<span class="t" style="left:120.4px;top:676.7px;letter-spacing:-0.24px">Validate</span>
<div class="sep" style="top:699px"></div>
<span class="t" style="left:120.4px;top:705.7px;letter-spacing:-0.23px">Properties</span>
<span class="t" style="left:318.8px;top:705.7px;letter-spacing:0.08px">Alt+Enter</span>
<svg style="left:0;top:0" width="1015" height="734" viewBox="0 0 1015 734"><rect x="105.4" y="702.6" width="283" height="22.4" rx="1.5" fill="none" stroke="#fbe4e8" stroke-width="1.2"/><rect x="103.4" y="700.6" width="287" height="26.2" rx="2.5" fill="none" stroke="#ab3a35" stroke-width="3"/></svg>
<div class="a" style="left:237px;top:525px;width:134.5px;height:19.5px;background:#fff;border:1px solid #6e6e6e;box-shadow:2px 2px 3px rgba(0,0,0,.55)"></div>
<span class="t" style="left:243.5px;top:526.7px;color:#575757;letter-spacing:-0.14px">Open Properties Dialog</span>
</div>
</body></html>
